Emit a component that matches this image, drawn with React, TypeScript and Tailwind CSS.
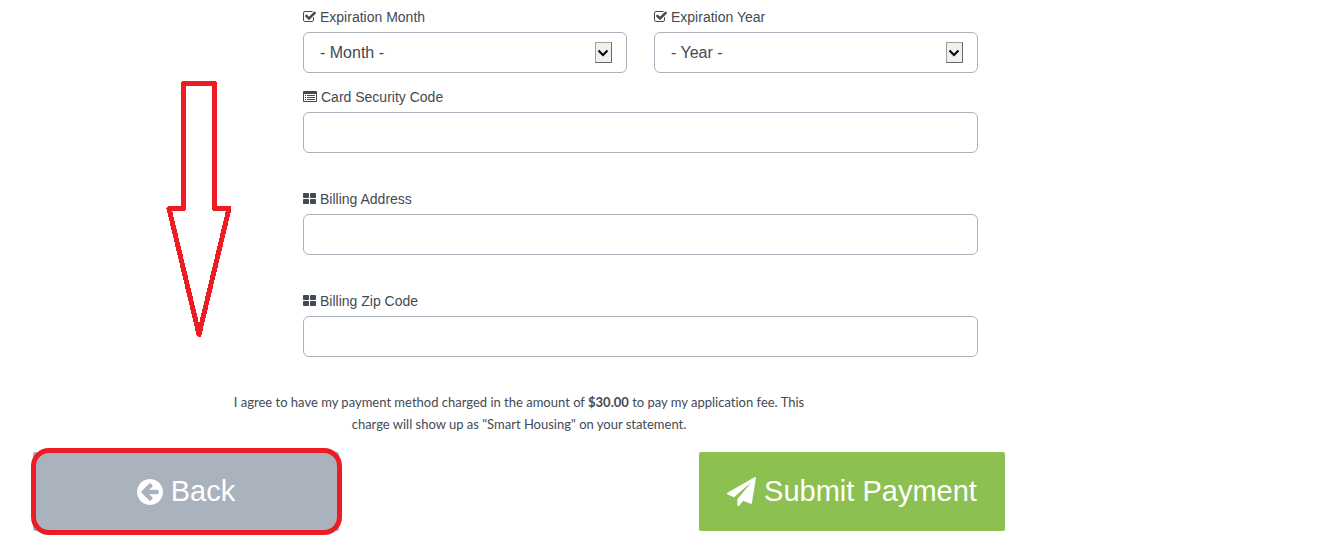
import type { ReactNode } from "react";

type IconProps = {
  viewBox: string;
  className: string;
  path: string;
};

function Icon({ viewBox, className, path }: IconProps) {
  return (
    <svg
      viewBox={viewBox}
      className={className}
      fill="currentColor"
      aria-hidden="true"
    >
      <path d={path} />
    </svg>
  );
}

function CheckIcon() {
  return (
    <Icon
      viewBox="64 0 1664 1792"
      className="h-[14px] w-[13px] shrink-0"
      path="M1472 930v318q0 119-84.5 203.5t-203.5 84.5h-832q-119 0-203.5-84.5t-84.5-203.5v-832q0-119 84.5-203.5t203.5-84.5h832q63 0 117 25 15 7 18 23 3 17-9 29l-49 49q-10 10-23 10-3 0-9-2-23-6-45-6h-832q-66 0-113 47t-47 113v832q0 66 47 113t113 47h832q66 0 113-47t47-113v-254q0-13 9-22l64-64q10-10 23-10 6 0 12 3 20 8 20 29zm231-489l-814 814q-24 24-57 24t-57-24l-430-430q-24-24-24-57t24-57l110-110q24-24 57-24t57 24l263 263 647-647q24-24 57-24t57 24l110 110q24 24 24 57t-24 57z"
    />
  );
}

function ListIcon() {
  return (
    <svg
      viewBox="0 0 14 14"
      className="h-[14px] w-[14px] shrink-0"
      fill="currentColor"
      aria-hidden="true"
    >
      <path
        fillRule="evenodd"
        d="M1 1h12a1 1 0 0 1 1 1v9a1 1 0 0 1-1 1H1a1 1 0 0 1-1-1V2a1 1 0 0 1 1-1zM1 4v7h12V4z"
      />
      <path d="M2 5h1v1H2zM4 5h8v1H4zM2 7h1v1H2zM4 7h8v1H4zM2 9h1v1H2zM4 9h8v1H4z" />
    </svg>
  );
}

function BlocksIcon() {
  return (
    <Icon
      viewBox="64 0 1664 1792"
      className="h-[14px] w-[13px] shrink-0"
      path="M832 1024v384q0 52-38 90t-90 38h-512q-52 0-90-38t-38-90v-384q0-52 38-90t90-38h512q52 0 90 38t38 90zm0-768v384q0 52-38 90t-90 38h-512q-52 0-90-38t-38-90v-384q0-52 38-90t90-38h512q52 0 90 38t38 90zm896 768v384q0 52-38 90t-90 38h-512q-52 0-90-38t-38-90v-384q0-52 38-90t90-38h512q52 0 90 38t38 90zm0-768v384q0 52-38 90t-90 38h-512q-52 0-90-38t-38-90v-384q0-52 38-90t90-38h512q52 0 90 38t38 90z"
    />
  );
}

type FieldProps = {
  id: string;
  label: string;
  icon: ReactNode;
  children: ReactNode;
};

function Field({ id, label, icon, children }: FieldProps) {
  return (
    <div className="grid gap-[5px]">
      <label
        htmlFor={id}
        className="flex items-center gap-1 text-[14px] leading-5"
      >
        {icon}
        {label}
      </label>
      {children}
    </div>
  );
}

function TextField({ id, label, icon }: Omit<FieldProps, "children">) {
  return (
    <Field id={id} label={label} icon={icon}>
      <input
        id={id}
        type="text"
        className="h-[41px] w-full rounded-md border border-[#aab2bd] bg-white px-4 text-base"
      />
    </Field>
  );
}

type SelectFieldProps = {
  id: string;
  label: string;
  placeholder: string;
  options: string[];
};

function SelectField({ id, label, placeholder, options }: SelectFieldProps) {
  return (
    <Field id={id} label={label} icon={<CheckIcon />}>
      <div className="relative">
        <select
          id={id}
          className="block h-[41px] w-full appearance-none rounded-md border border-[#aab2bd] bg-white px-4 text-base"
        >
          <option value="">{placeholder}</option>
          {options.map((option) => (
            <option key={option} value={option}>
              {option}
            </option>
          ))}
        </select>
        <span className="pointer-events-none absolute inset-y-0 right-[15px] flex items-center">
          <span className="flex h-[21px] w-[17px] items-center justify-center border border-t-[#a0a0a0] border-r-[#696969] border-b-[#696969] border-l-[#a0a0a0] bg-[#f0f0f0]">
            <svg
              viewBox="0 0 11 8"
              className="h-2 w-[11px]"
              fill="none"
              stroke="#000"
              strokeWidth="2"
              aria-hidden="true"
            >
              <path d="M.5 1.500l4.500 4.500L9.500 1.500" />
            </svg>
          </span>
        </span>
      </div>
    </Field>
  );
}

const months = ["01", "02", "03", "04", "05", "06", "07", "08", "09", "10", "11", "12"];
const years = ["2017", "2018", "2019", "2020", "2021", "2022"];

export default function App() {
  return (
    <main className="relative max-w-[1038px] bg-white px-[33px] pt-[7px] pb-[23px] font-['Liberation_Sans',Arial,sans-serif] text-[#434a54]">
      <form onSubmit={(e) => e.preventDefault()}>
        <div className="mr-[27px] ml-[270px] grid gap-9">
          <div className="grid gap-[14px]">
            <div className="grid grid-cols-2 gap-[27px]">
              <SelectField
                id="expiration-month"
                label="Expiration Month"
                placeholder="- Month -"
                options={months}
              />
              <SelectField
                id="expiration-year"
                label="Expiration Year"
                placeholder="- Year -"
                options={years}
              />
            </div>
            <TextField
              id="security-code"
              label="Card Security Code"
              icon={<ListIcon />}
            />
          </div>
          <TextField
            id="billing-address"
            label="Billing Address"
            icon={<BlocksIcon />}
          />
          <TextField
            id="billing-zip"
            label="Billing Zip Code"
            icon={<BlocksIcon />}
          />
        </div>

        <p className="mt-[34px] text-center font-[Lato,sans-serif] text-[13px] leading-[22px] [font-variant-ligatures:none]">
          I agree to have my payment method charged in the amount of{" "}
          <strong>$30.00</strong> to pay my application fee. This
          <br />
          charge will show up as "Smart Housing" on your statement.
        </p>

        <div className="mt-[17px] flex justify-between gap-6">
          <div className="relative w-[306px]">
            <button
              type="button"
              className="flex h-[79px] w-full items-center justify-center gap-2 rounded-xs bg-[#aab2bd] text-[29px] text-white"
            >
              <Icon
                viewBox="128 128 1536 1536"
                className="h-[26px] w-[26px]"
                path="M1408 960v-128q0-26-19-45t-45-19h-502l189-189q19-19 19-45t-19-45l-91-91q-18-18-45-18t-45 18l-362 362-91 91q-18 18-18 45t18 45l91 91 362 362q18 18 45 18t45-18l91-91q18-18 18-45t-18-45l-189-189h502q26 0 45-19t19-45zm256-64q0 209-103 385.5t-279.5 279.5-385.5 103-385.5-103-279.5-279.5-103-385.5 103-385.5 279.5-279.5 385.5-103 385.5 103 279.5 279.5 103 385.5z"
              />
              Back
            </button>
            <span className="pointer-events-none absolute -top-1 -right-[3px] -bottom-1 -left-[2px] rounded-[18px] border-5 border-[#ed1c24]" />
          </div>
          <button
            type="submit"
            className="flex h-[79px] w-[306px] items-center justify-center gap-2 rounded-xs bg-[#8cc152] text-[29px] text-white"
          >
            <Icon
              viewBox="0 0 1792 1792"
              className="h-[29px] w-[29px]"
              path="M1764 11q33 24 27 64l-256 1536q-5 29-32 45-14 8-31 8-11 0-24-5l-453-185-242 295q-18 23-49 23-13 0-22-4-19-7-30.5-23.5t-11.5-36.5v-349l864-1059-1069 925-395-162q-37-14-40-55-2-40 32-59l1664-960q15-9 32-9 20 0 36 11z"
            />
            Submit Payment
          </button>
        </div>
      </form>

      {/* hint arrow pointing down to the back button */}
      <svg
        viewBox="0 0 66 258"
        className="pointer-events-none absolute top-20 left-[166px] h-[258px] w-[66px]"
        fill="none"
        stroke="#ed1c24"
        strokeWidth="5"
        strokeLinejoin="round"
        shapeRendering="crispEdges"
        aria-hidden="true"
      >
        <path d="M17.5 3.5h31v125H63L33 254.500 3 128.500h14.500z" />
      </svg>
    </main>
  );
}
